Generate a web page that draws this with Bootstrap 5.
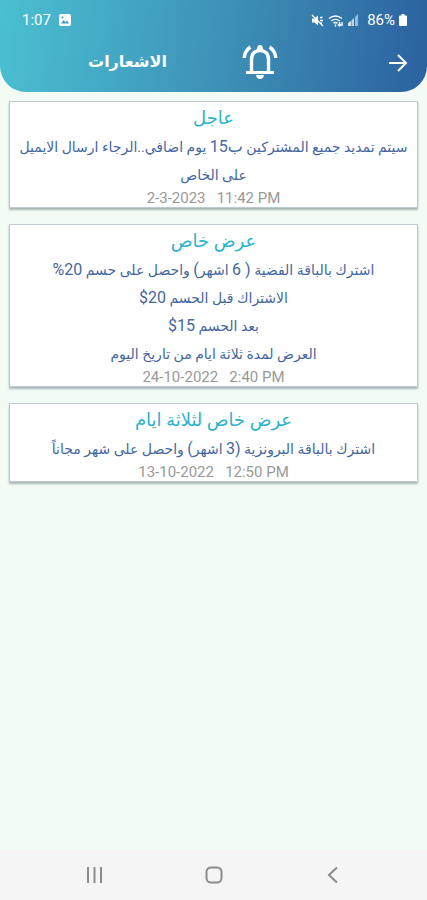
<!DOCTYPE html>
<html lang="ar" dir="rtl">
<head>
<meta charset="utf-8">
<meta name="viewport" content="width=device-width, initial-scale=1">
<title>الاشعارات</title>
<link href="https://cdn.jsdelivr.net/npm/bootstrap@5.3.0/dist/css/bootstrap.min.css" rel="stylesheet">
<style>
body { background: #f3fbf5; font-family: Roboto, "DejaVu Sans", sans-serif; }
.app-header { background: linear-gradient(97deg, #4bc0d2 0%, #3e93b9 50%, #2b619f 100%); border-radius: 0 0 26px 26px; height: 92px; }
.status-bar { height: 40px; font-size: 15px; line-height: 20px; padding: 0 20px 0 22px; }
.title-bar { height: 44px; }
.title-bar h1 { font-size: 16px; line-height: 24px; }
.side-slot { width: 149px; padding-right: 19px; }
.title-slot { padding-right: 75px; }
.plain-btn { background: none; border: 0; padding: 0; line-height: 0; color: inherit; }
.notices { padding: 9px 9px 16px; }
.notice { border: 1px solid #bccbd1; border-radius: 0; box-shadow: 0 2px 2px #a9b6b5; }
.notice h2 { color: #2fb2cb; font-size: 18px; line-height: 31px; }
.notice p { color: #4567a0; font-size: 14px; line-height: 28px; }
.notice .num { font-size: 16px; }
.notice time { color: #999; font-size: 15px; line-height: 18px; white-space: pre; }
.system-nav { background: #f5f5f5; height: 50px; color: #8b8b8b; padding: 0 84px; }
</style>
<script src="https://cdn.jsdelivr.net/npm/bootstrap@5.3.0/dist/js/bootstrap.bundle.min.js"></script>
</head>
<body class="min-vh-100 d-flex flex-column">
<header class="app-header text-white">
  <div class="status-bar d-flex justify-content-between align-items-center" dir="ltr">
    <div class="d-flex align-items-center gap-2">
      <span>1:07</span>
      <svg width="12" height="12" viewBox="0 0 12 12" aria-hidden="true"><rect width="12" height="12" rx="2" fill="#fff"/><path d="M2 9.500 4.500 6l2 2.200L8 6.500l2 3z" fill="#3f9dbe"/><circle cx="3.500" cy="3.500" r="1" fill="#3f9dbe"/></svg>
    </div>
    <div class="d-flex align-items-center gap-1">
      <svg width="13" height="13" viewBox="0 0 13 13" aria-hidden="true"><path d="M1 4.500h2.500L7 1.500v10L3.500 8.500H1z" fill="#fff"/><path d="M1 1l11 11M9 3.500h2.500M9 6.500h3M9 9h2" stroke="#fff" stroke-width="1.300" fill="none"/></svg>
      <svg width="16" height="13" viewBox="0 0 16 13" aria-hidden="true" fill="none" stroke="#fff" stroke-width="1.400"><path d="M1 4.500q6.500-5 13 0M3.200 7q4.300-3.300 8.600 0M5.500 9.300q2-1.600 4 0"/><path d="M7.500 10.500v2M11.500 8v4M10 10.500l1.500 1.500 1.500-1.500M14 12V8"/></svg>
      <svg width="11" height="12" viewBox="0 0 11 12" aria-hidden="true" fill="#fff"><path d="M0 12V9l3-2v5z" opacity=".8"/><path d="M3.500 12V6.500L6 4v8z" opacity=".7"/><path d="M7 12V3l3-3v12z" opacity=".5"/></svg>
      <span class="ms-1">86%</span>
      <svg width="8" height="12" viewBox="0 0 8 12" aria-hidden="true" fill="#fff"><path d="M2.500 0h3v1.500H7q1 0 1 1V11q0 1-1 1H1q-1 0-1-1V2.500q0-1 1-1h1.500z"/></svg>
    </div>
  </div>
  <div class="title-bar d-flex align-items-center">
    <div class="side-slot">
      <button class="plain-btn" type="button" aria-label="رجوع"><svg width="20" height="18" viewBox="0 0 20 18" fill="none" stroke="#fff" stroke-width="2"><path d="M1 9h17M10 1l8 8-8 8"/></svg></button>
    </div>
    <svg width="36" height="36" viewBox="0 0 36 36" aria-hidden="true" fill="none" stroke="#fff" stroke-width="3.400"><path d="M9.500 28V15.500C9.500 9.500 13 6.500 18 6.500s8.500 3 8.500 9V28"/><path d="M4 28.500h28" stroke-width="3"/><path d="M2.200 14Q2.700 7 8.400 3M33.800 14Q33.300 7 27.600 3"/><path d="M14 31h8q-.5 4-4 4t-4-4zM15 6q0-5 3-5T21 6z" fill="#fff" stroke="none"/></svg>
    <div class="title-slot"><h1 class="m-0 fw-bold">الاشعارات</h1></div>
  </div>
</header>
<main class="notices flex-grow-1 d-flex flex-column gap-3">
  <article class="notice card text-center">
    <h2 class="m-0 fw-normal">عاجل</h2>
    <p class="m-0">سيتم تمديد جميع المشتركين <span class="num">ب15</span> يوم اضافي..الرجاء ارسال الايميل على الخاص</p>
    <time dir="ltr" datetime="2023-03-02T23:42">2-3-2023   11:42 PM</time>
  </article>
  <article class="notice card text-center">
    <h2 class="m-0 fw-normal">عرض خاص</h2>
    <p class="m-0">اشترك بالباقة الفضية <span class="num">( 6</span> اشهر<span class="num">)</span> واحصل على حسم <span class="num">20%</span><br>الاشتراك قبل الحسم <span class="num">20$</span><br>بعد الحسم <span class="num">15$</span><br>العرض لمدة ثلاثة ايام من تاريخ اليوم</p>
    <time dir="ltr" datetime="2022-10-24T14:40">24-10-2022   2:40 PM</time>
  </article>
  <article class="notice card text-center">
    <h2 class="m-0 fw-normal">عرض خاص لثلاثة ايام</h2>
    <p class="m-0">اشترك بالباقة البرونزية <span class="num">(3</span> اشهر<span class="num">)</span> واحصل على شهر مجاناً</p>
    <time dir="ltr" datetime="2022-10-13T12:50">13-10-2022   12:50 PM</time>
  </article>
</main>
<nav class="system-nav d-flex justify-content-between align-items-center" dir="ltr" aria-label="النظام">
  <button class="plain-btn" type="button" aria-label="التطبيقات الأخيرة"><svg width="20" height="18" viewBox="0 0 20 18" stroke="currentColor" stroke-width="2"><path d="M4 1v16M10.500 1v16M17 1v16"/></svg></button>
  <button class="plain-btn" type="button" aria-label="الرئيسية"><svg width="20" height="20" viewBox="0 0 20 20" fill="none" stroke="currentColor" stroke-width="2"><rect x="2.500" y="2.500" width="15" height="15" rx="4.500"/></svg></button>
  <button class="plain-btn" type="button" aria-label="السابق"><svg width="20" height="18" viewBox="0 0 20 18" fill="none" stroke="currentColor" stroke-width="2"><path d="M14 1.500 6 9l8 7.500"/></svg></button>
</nav>
</body>
</html>
